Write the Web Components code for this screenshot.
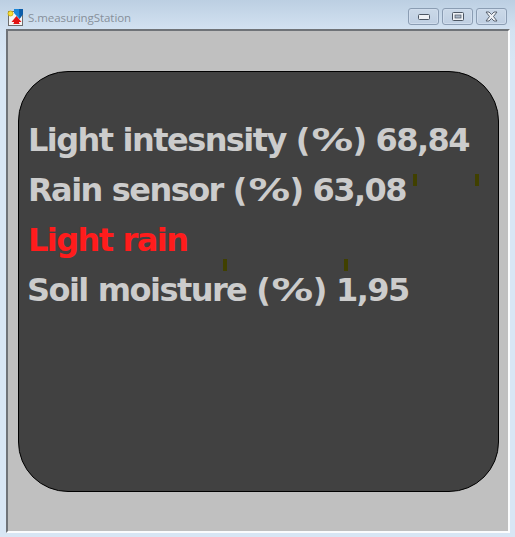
<!DOCTYPE html>
<html>
<head>
<meta charset="utf-8">
<style>
html,body{margin:0;padding:0;height:100%;overflow:hidden}
body{background:#d8e6f4}
</style>
</head>
<body>
<station-window title="S.measuringStation">
  <sensor-panel>
    <sensor-line>Light intesnsity (<sensor-pct>%</sensor-pct>) 68,84</sensor-line>
    <sensor-line>Rain sensor (<sensor-pct>%</sensor-pct>) 63,08</sensor-line>
    <sensor-line color="#ff1c1c">Light rain</sensor-line>
    <sensor-line shift="-1">Soil moisture (<sensor-pct>%</sensor-pct>) 1,95</sensor-line>
  </sensor-panel>
</station-window>
<script>
const appIcon = `<svg width="18" height="18" viewBox="0 0 18 18" style="display:block">
<rect x="1.500" y="3.500" width="14" height="14" fill="#f4f4f4" stroke="#6d6d6d"/>
<circle cx="3.500" cy="5.500" r="2.500" fill="#f5dc3a" stroke="#c9a800" stroke-width=".8"/>
<path d="M7 1h9v5l-3.500 5L7 5z" fill="#1a86d8"/>
<path d="M12 1h4v5l-3.500 5z" fill="#0c5ca8"/>
<path d="M9.500 8l-5 6h2.500v1h-1l1 1h5l1-1h-1v-1h2.500z" fill="#e21313"/>
</svg>`

class WinButton extends HTMLElement {
    constructor() {
        super()
        let shadow = this.attachShadow({ mode: "open" })
        shadow.innerHTML = `<style>
:host{display:flex;align-items:center;justify-content:center;width:29px;height:15px;border:1px solid #8b9db3;border-radius:3px;background:linear-gradient(#cbd9e8,#bfcfe2);box-shadow:inset 0 0 0 1px #d0dded}
</style><slot></slot>`
    }
}
customElements.define("win-button", WinButton)

class StationWindow extends HTMLElement {
    constructor() {
        super()
        let shadow = this.attachShadow({ mode: "open" })
        shadow.innerHTML = `<style>
:host{display:flex;flex-direction:column;width:515px;height:537px;box-sizing:border-box;background:linear-gradient(#bccfe2 0,#d3e2f1 30px,#d8e6f4 60px);font-family:"Liberation Sans",sans-serif}
.bar{height:29px;flex:none;display:flex;align-items:flex-start;box-sizing:border-box;padding:8px 8px 0 7px}
.title{font:11.5px/16px "Open Sans","Liberation Sans",sans-serif;color:#87909a;margin:2px 0 0 3px;flex:1;letter-spacing:-.05px}
.btns{display:flex;gap:3px}
.client{flex:1;margin:0 5px 4px 6px;background:#c0c0c0;border-top:2px solid #6f7378;border-left:2px solid #6f7378;border-bottom:2px solid #fbfcfd;border-right:2px solid #fbfcfd;display:flex;flex-direction:column;padding:40px 9px 39px 10px;min-height:0}
</style>
<div class="bar">
  ${appIcon}
  <span class="title"></span>
  <div class="btns">
    <win-button><svg width="12" height="6" viewBox="0 0 12 6"><rect x=".5" y=".5" width="11" height="5" rx="1" fill="#eef1f5" stroke="#4c5663"/></svg></win-button>
    <win-button><svg width="12" height="9" viewBox="0 0 12 9"><rect x=".5" y=".5" width="11" height="8" rx="1" fill="#eef1f5" stroke="#4c5663"/><rect x="3" y="3" width="6" height="3" fill="#a9b6c6" stroke="#4c5663" stroke-width=".7"/></svg></win-button>
    <win-button><svg width="13" height="11" viewBox="0 0 13 11"><path d="M1 1h3l2.500 2.500L9 1h3L8.500 5.500 12 10H9L6.500 7.500 4 10H1l3.500-4.500z" fill="#eef1f5" stroke="#4c5663" stroke-width=".9"/></svg></win-button>
  </div>
</div>
<div class="client"><slot></slot></div>`
        shadow.querySelector('.title').textContent = this.getAttribute('title')
    }
}
customElements.define("station-window", StationWindow)

class SensorPanel extends HTMLElement {
    constructor() {
        super()
        let shadow = this.attachShadow({ mode: "open" })
        shadow.innerHTML = `<style>
:host{display:flex;flex-direction:column;flex:1;position:relative;box-sizing:border-box;background:#414141;border:1px solid #000;border-radius:50px;padding:43px 0 0 9px;min-height:0}
.tick{position:absolute;width:4px;height:12px;background:#404000}
</style>
<slot></slot>
<i class="tick" style="left:394px;top:102px"></i>
<i class="tick" style="left:456px;top:102px"></i>
<i class="tick" style="left:204px;top:187px"></i>
<i class="tick" style="left:325px;top:187px"></i>`
    }
}
customElements.define("sensor-panel", SensorPanel)

class SensorLine extends HTMLElement {
    constructor() {
        super()
        let shadow = this.attachShadow({ mode: "open" })
        shadow.innerHTML = `<style>
:host{display:block;height:50px;font:bold 32px/50px "DejaVu Sans",sans-serif;letter-spacing:-1.55px;word-spacing:.4px;white-space:nowrap;color:#cccccc}
</style><slot></slot>`
        if (this.getAttribute('color')) this.style.color = this.getAttribute('color')
        if (this.getAttribute('shift')) this.style.marginLeft = this.getAttribute('shift') + 'px'
    }
}
customElements.define("sensor-line", SensorLine)

// the percent sign is much wider in the original font
class SensorPct extends HTMLElement {
    constructor() {
        super()
        let shadow = this.attachShadow({ mode: "open" })
        shadow.innerHTML = `<style>
:host{display:inline-block;transform:scaleX(1.3);margin:0 6px 0 7px}
</style><slot></slot>`
    }
}
customElements.define("sensor-pct", SensorPct)
</script>
</body>
</html>
